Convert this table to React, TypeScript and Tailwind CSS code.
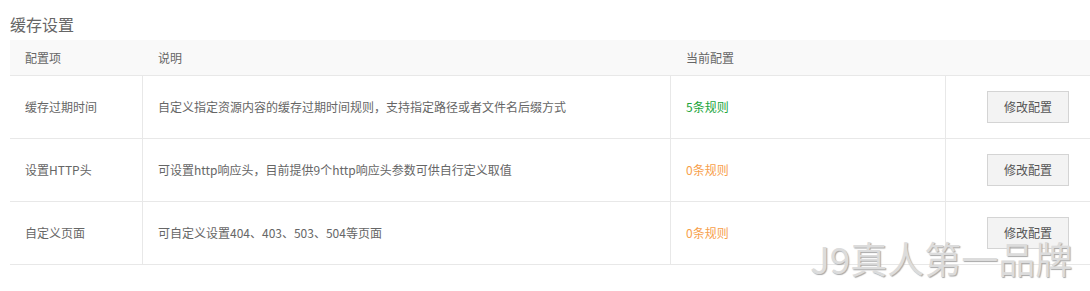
import React from 'react';

type Row = {
  name: string;
  desc: string;
  count: number;
};

const rows: Row[] = [
  { name: '缓存过期时间', desc: '自定义指定资源内容的缓存过期时间规则，支持指定路径或者文件名后缀方式', count: 5 },
  { name: '设置HTTP头', desc: '可设置http响应头，目前提供9个http响应头参数可供自行定义取值', count: 0 },
  { name: '自定义页面', desc: '可自定义设置404、403、503、504等页面', count: 0 },
];

const font = { fontFamily: '"Noto Sans CJK SC", "Noto Sans", sans-serif' };

export default function App() {
  return (
    <div className="relative w-[1090px] h-[291px] overflow-hidden bg-white text-[#666]" style={font}>
      <div className="pl-[10px]">
        <h2 className="pt-[14px] pb-[5px] text-[16px] leading-[21px] text-[#666] font-normal">缓存设置</h2>

        {/* 表头 */}
        <div className="grid grid-cols-[133px_528px_275px_1fr] h-[36px] bg-[#f9f9f9] border-b border-[#e8e8e8] text-[12px] items-center">
          <div className="px-[15px]">配置项</div>
          <div className="px-[15px]">说明</div>
          <div className="px-[15px]">当前配置</div>
          <div />
        </div>

        {rows.map((r) => (
          <div
            key={r.name}
            className="grid grid-cols-[133px_528px_275px_1fr] h-[63px] border-b border-[#e8e8e8] text-[12px]"
          >
            <div className="flex items-center px-[15px] border-r border-[#e8e8e8]">{r.name}</div>
            <div className="flex items-center px-[15px] border-r border-[#e8e8e8]">{r.desc}</div>
            <div className="flex items-center px-[15px] border-r border-[#e8e8e8]">
              <span className={r.count > 0 ? 'text-[#20a53a]' : 'text-[#f7a04b]'}>{r.count}条规则</span>
            </div>
            <div className="flex items-center justify-end pr-[21px]">
              <button className="w-[82px] h-[32px] bg-[#f3f3f3] border border-[#d4d4d4] text-[12px] text-[#555]">
                修改配置
              </button>
            </div>
          </div>
        ))}
      </div>

      {/* 水印 */}
      <div
        className="absolute left-[810px] top-[236px] text-[37px] leading-[44px] text-[#dcdcdc] whitespace-nowrap pointer-events-none"
        style={{ textShadow: '1px 1px 1px #a8a8a8' }}
      >
        J9真人第一品牌
      </div>
    </div>
  );
}
